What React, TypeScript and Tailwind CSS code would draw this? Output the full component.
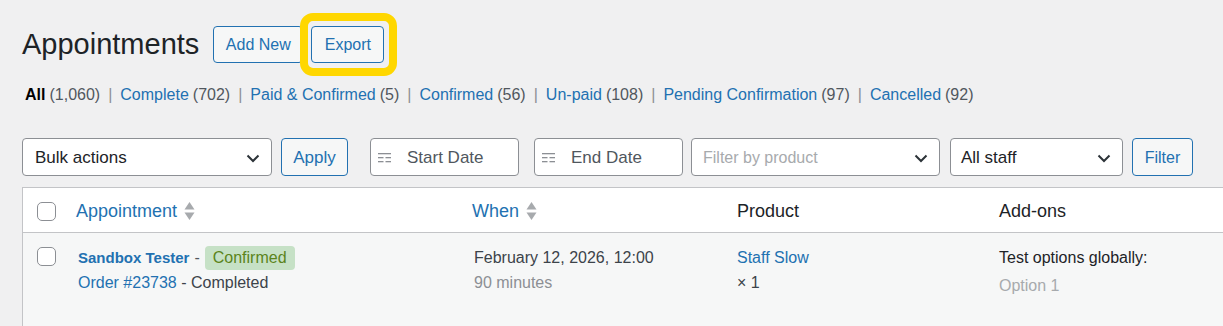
import React from "react";

const font = { fontFamily: '"Liberation Sans", Arial, sans-serif' };

function Chevron() {
  return (
    <svg width="14" height="9" viewBox="0 0 14 9" className="shrink-0">
      <path d="M1.5 1.5 L7 7 L12.5 1.5" fill="none" stroke="#2c3338" strokeWidth="2" />
    </svg>
  );
}

function CalIcon() {
  return (
    <svg width="13" height="12" viewBox="0 0 13 12" className="shrink-0">
      <g fill="#8c8f94">
        <rect x="0" y="1" width="13" height="1.3" />
        <rect x="0" y="5" width="5.5" height="1.3" />
        <rect x="7.5" y="5" width="5.5" height="1.3" />
        <rect x="0" y="9" width="5.5" height="1.3" />
        <rect x="7.5" y="9" width="5.5" height="1.3" />
      </g>
    </svg>
  );
}

function SortArrows() {
  return (
    <svg width="11" height="20" viewBox="0 0 11 20" className="ml-[7px] shrink-0">
      <path d="M5.5 1 L10.5 8.5 L0.5 8.5 Z" fill="#a7aaad" />
      <path d="M0.5 11.5 L10.5 11.5 L5.5 19 Z" fill="#a7aaad" />
    </svg>
  );
}

function Check() {
  return (
    <span className="block w-[19px] h-[19px] rounded-[5px] border border-[#8c8f94] bg-white" />
  );
}

const views: [string, string][] = [
  ["Complete", "702"],
  ["Paid & Confirmed", "5"],
  ["Confirmed", "56"],
  ["Un-paid", "108"],
  ["Pending Confirmation", "97"],
  ["Cancelled", "92"],
];

export default function App() {
  return (
    <div
      className="w-[1223px] h-[326px] overflow-hidden bg-[#f0f0f1] text-[#1d2327] pl-[22px]"
      style={font}
    >
      {/* heading */}
      <div className="flex items-center pt-[26px]">
        <h1 className="text-[29px] leading-[37px] font-normal text-[#1d2327]">Appointments</h1>
        <button className="ml-[14px] h-[37px] w-[90px] rounded-[4px] border border-[#2271b1] bg-[#f6f7f7] text-[16px] text-[#2271b1]">
          Add New
        </button>
        <div className="relative ml-[8px]">
          <button className="h-[37px] w-[73px] rounded-[4px] border border-[#2271b1] bg-[#f6f7f7] text-[16px] text-[#2271b1]">
            Export
          </button>
          <span className="pointer-events-none absolute -left-[11px] -right-[13px] -top-[13px] -bottom-[13px] rounded-[13px] border-[8px] border-[#ffd700]" />
        </div>
      </div>

      {/* status views */}
      <div className="mt-[20px] flex items-center h-[24px] text-[16px] pl-[3px]">
        <span className="font-bold text-[#000]">All</span>
        <span className="ml-[4px] text-[#50575e]">(1,060)</span>
        {views.map(([label, n]) => (
          <React.Fragment key={label}>
            <span className="mx-[8px] text-[#8c8f94]">|</span>
            <span className="text-[#2271b1]">{label}</span>
            <span className="ml-[4px] text-[#50575e]">({n})</span>
          </React.Fragment>
        ))}
      </div>

      {/* filters */}
      <div className="mt-[31px] flex items-center h-[38px] text-[16px]">
        <div className="w-[250px] h-[38px] rounded-[4px] border border-[#8c8f94] bg-white flex items-center justify-between pl-[12px] pr-[11px] pt-[2px]">
          <span className="text-[#1d2327] text-[17px]">Bulk actions</span>
          <Chevron />
        </div>
        <button className="ml-[9px] w-[67px] h-[38px] rounded-[4px] border border-[#2271b1] bg-[#f6f7f7] text-[#2271b1] text-[17px] pt-[2px]">
          Apply
        </button>
        <div className="ml-[22px] w-[149px] h-[38px] rounded-[4px] border border-[#8c8f94] bg-white flex items-center pl-[7px] pt-[2px]">
          <CalIcon />
          <span className="ml-[16px] text-[#50575e] text-[17px]">Start Date</span>
        </div>
        <div className="ml-[15px] w-[149px] h-[38px] rounded-[4px] border border-[#8c8f94] bg-white flex items-center pl-[7px] pt-[2px]">
          <CalIcon />
          <span className="ml-[16px] text-[#50575e] text-[17px]">End Date</span>
        </div>
        <div className="ml-[8px] w-[249px] h-[38px] rounded-[4px] border border-[#8c8f94] bg-white flex items-center justify-between pl-[11px] pr-[11px] pt-[2px]">
          <span className="text-[#a7aaad] text-[16px]">Filter by product</span>
          <Chevron />
        </div>
        <div className="ml-[10px] w-[173px] h-[38px] rounded-[4px] border border-[#8c8f94] bg-white flex items-center justify-between pl-[10px] pr-[11px] pt-[2px]">
          <span className="text-[#1d2327] text-[17px]">All staff</span>
          <Chevron />
        </div>
        <button className="ml-[9px] w-[61px] h-[38px] rounded-[4px] border border-[#2271b1] bg-[#f6f7f7] text-[#2271b1] text-[16px] pt-[2px]">
          Filter
        </button>
      </div>

      {/* list table */}
      <div className="mt-[11px] w-[1240px] border border-[#c3c4c7] bg-white">
        <div className="grid grid-cols-[53px_396px_265px_262px_1fr] h-[45px] items-center border-b border-[#c3c4c7] text-[18px] pt-[2px]">
          <div className="pl-[14px]"><Check /></div>
          <div className="flex items-center text-[#2271b1]">Appointment<SortArrows /></div>
          <div className="flex items-center text-[#2271b1]">When<SortArrows /></div>
          <div className="text-[#1d2327]">Product</div>
          <div className="text-[#1d2327]">Add-ons</div>
        </div>
        <div className="grid grid-cols-[53px_396px_265px_262px_1fr] h-[100px] items-start bg-[#f6f7f7] text-[16px] pt-[13px]">
          <div className="pl-[14px] pt-[1px]"><Check /></div>
          <div className="pl-[2px]">
            <div className="flex items-center h-[24px]">
              <span className="font-bold text-[15px] text-[#2271b1]">Sandbox Tester</span>
              <span className="ml-[5px] text-[#50575e]">-</span>
              <span className="ml-[5px] rounded-[4px] bg-[#c6e1c6] text-[#5b841b] px-[8px] leading-[24px]">Confirmed</span>
            </div>
            <div className="mt-[1px] h-[24px] leading-[24px]">
              <span className="text-[#2271b1]">Order #23738</span>
              <span className="text-[#3c434a]"> - Completed</span>
            </div>
          </div>
          <div className="pl-[2px]">
            <div className="h-[24px] leading-[24px] text-[#3c434a]">February 12, 2026, 12:00</div>
            <div className="mt-[1px] h-[24px] leading-[24px] text-[#8c8f94]">90 minutes</div>
          </div>
          <div>
            <div className="h-[24px] leading-[24px] text-[#2271b1]">Staff Slow</div>
            <div className="mt-[1px] h-[24px] leading-[24px] text-[#3c434a]">× 1</div>
          </div>
          <div>
            <div className="h-[24px] leading-[24px] text-[#1d2327]">Test options globally:</div>
            <div className="mt-[4px] h-[24px] leading-[24px] text-[#a7aaad]">Option 1</div>
          </div>
        </div>
      </div>
    </div>
  );
}
